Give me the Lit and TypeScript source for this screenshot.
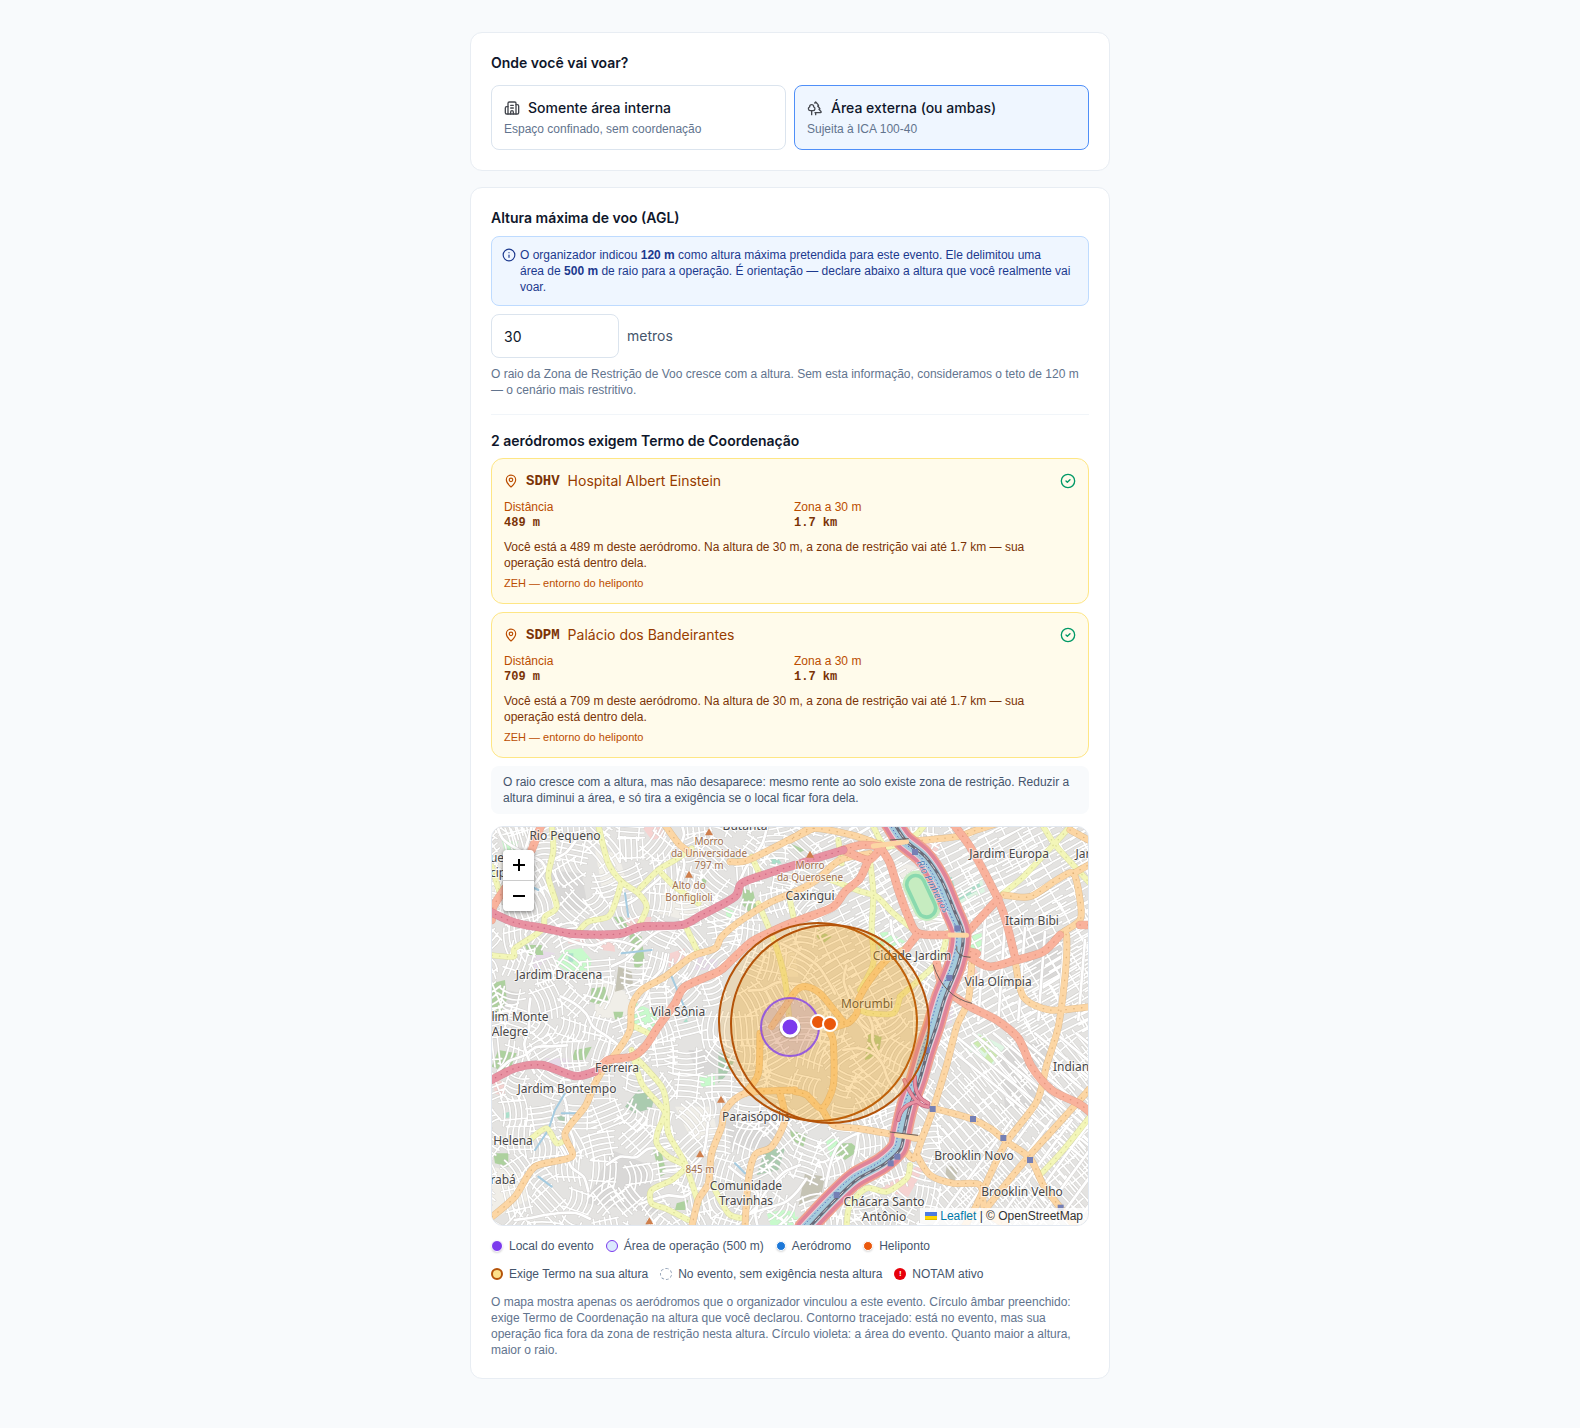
import { LitElement, html, svg, css } from 'lit';
import { customElement, property, state } from 'lit/decorators.js';
import { classMap } from 'lit/directives/class-map.js';

const icon = (size: number, body: unknown) => html`<svg
  class="icon"
  width=${size}
  height=${size}
  viewBox="0 0 24 24"
  fill="none"
  stroke="currentColor"
  stroke-width="2"
  stroke-linecap="round"
  stroke-linejoin="round"
  aria-hidden="true"
>${body}</svg>`;

const building = svg`<path d="M10 12h4"/><path d="M10 8h4"/><path d="M14 21v-3a2 2 0 0 0-4 0v3"/><path d="M6 10H4a2 2 0 0 0-2 2v7a2 2 0 0 0 2 2h16a2 2 0 0 0 2-2V9a2 2 0 0 0-2-2h-2"/><path d="M6 21V5a2 2 0 0 1 2-2h8a2 2 0 0 1 2 2v16"/>`;
const trees = svg`<path d="M10 10v.2A3 3 0 0 1 8.9 16H5a3 3 0 0 1-1-5.8V10a3 3 0 0 1 6 0Z"/><path d="M7 16v6"/><path d="M13 19v3"/><path d="M12 19h8.3a1 1 0 0 0 .7-1.7L18 14h.3a1 1 0 0 0 .7-1.7L16 9h.2a1 1 0 0 0 .8-1.7L13 3l-1.4 1.5"/>`;
const info = svg`<circle cx="12" cy="12" r="10"/><path d="M12 16v-4"/><path d="M12 8h.01"/>`;
const pin = svg`<path d="M20 10c0 4.993-5.539 10.193-7.399 11.799a1 1 0 0 1-1.202 0C9.539 20.193 4 14.993 4 10a8 8 0 0 1 16 0"/><circle cx="12" cy="10" r="3"/>`;
const check = svg`<circle cx="12" cy="12" r="10"/><path d="m9 12 2 2 4-4"/>`;

/* Smooth curve through a list of points (Catmull-Rom turned into Béziers). */
function curve(points: string): string {
  const p = points.split(' ').map((s) => s.split(',').map(Number));
  let d = `M${p[0]}`;
  for (let i = 0; i < p.length - 1; i++) {
    const a = p[Math.max(0, i - 1)];
    const b = p[i];
    const c = p[i + 1];
    const e = p[Math.min(p.length - 1, i + 2)];
    const c1 = [b[0] + (c[0] - a[0]) / 7, b[1] + (c[1] - a[1]) / 7];
    const c2 = [c[0] - (e[0] - b[0]) / 7, c[1] - (e[1] - b[1]) / 7];
    d += `C${c1.map(Math.round)} ${c2.map(Math.round)} ${c}`;
  }
  return d;
}

/* Repeatable pseudo-random numbers, so the street pattern is always the same. */
function random(seed: number) {
  let s = seed;
  return () => {
    s = (s * 1664525 + 1013904223) % 4294967296;
    return s / 4294967296;
  };
}

function localStreets(): string {
  const rnd = random(41);
  let d = '';
  for (let y = -20; y < 1240; y += 88) {
    for (let x = -20; x < 1840; x += 88) {
      const planned = x > 1330 || (x > 1000 && x < 1250 && y < 560);
      const angle = planned ? (y < 620 ? -0.5 : 0.85) + (rnd() - 0.5) * 0.12 : rnd() * 3.14;
      const cos = Math.cos(angle);
      const sin = Math.sin(angle);
      const cx = x + rnd() * 40;
      const cy = y + rnd() * 40;
      const half = 44 + rnd() * 20;
      const bend = planned ? 0 : (rnd() - 0.5) * 44;
      const step = planned ? 23 : 17;
      for (let k = -2; k <= 2; k++) {
        const ox = cx - sin * k * step;
        const oy = cy + cos * k * step;
        const l = half - (planned ? 0 : rnd() * 22);
        d += `M${Math.round(ox - cos * l)} ${Math.round(oy - sin * l)}Q${Math.round(ox - sin * bend)} ${Math.round(oy + cos * bend)} ${Math.round(ox + cos * l)} ${Math.round(oy + sin * l)}`;
      }
      for (const t of [-0.6, 0.5]) {
        const ox = cx + cos * half * t;
        const oy = cy + sin * half * t;
        d += `M${Math.round(ox + sin * 40)} ${Math.round(oy - cos * 40)}L${Math.round(ox - sin * 40)} ${Math.round(oy + cos * 40)}`;
      }
    }
  }
  return d;
}

function collectorStreets(): string {
  const rnd = random(7);
  let d = '';
  for (let i = 0; i < 34; i++) {
    let x = rnd() * 1300;
    let y = rnd() * 1220;
    let a = rnd() * 6.28;
    const pts = [`${Math.round(x)},${Math.round(y)}`];
    for (let k = 0; k < 5; k++) {
      a += (rnd() - 0.5) * 1.3;
      x += Math.cos(a) * 46;
      y += Math.sin(a) * 46;
      pts.push(`${Math.round(x)},${Math.round(y)}`);
    }
    d += curve(pts.join(' '));
  }
  for (let i = 0; i < 9; i++) {
    d += `M${1340 + i * 62} 640L${1790 + i * 62} 1010M${1330 + i * 60} 1240L${1580 + i * 60} 900`;
  }
  for (let i = 0; i < 6; i++) d += `M${1500 + i * 60} ${300 + i * 12}L${1480 + i * 60} 600`;
  return d;
}

const LOCAL = localStreets();
const COLLECTOR = collectorStreets();

/* Land cover: fill colour and polygons, at three units to the pixel. */
const LAND: [string, string[]][] = [
  ['#f0eee8', ['20,110 90,120 130,200 60,260 20,230', '330,90 400,100 420,170 350,200', '540,190 640,200 680,260 600,300 520,280', '330,470 430,520 440,600 330,590', '570,860 680,860 700,950 620,960', '20,1040 110,1060 130,1140 20,1200', '1230,120 1290,140 1380,310 1300,310 1250,240', '870,380 930,400 940,470 880,470']],
  ['#d9d8d7', ['180,150 290,160 310,270 210,270', '610,690 700,690 690,780 640,770', '720,900 880,880 870,980 740,990', '380,990 480,1030 520,1180 300,1150', '20,500 110,520 60,600', '1320,560 1400,590 1380,640', '1540,690 1690,660 1680,880 1560,860', '1600,330 1750,350 1760,470 1640,480']],
  ['#f6d3d1', ['420,295 500,290 490,330 420,335', '330,350 385,345 390,395 350,390', '555,400 600,385 600,430 550,440', '245,345 300,350 300,375 250,370', '1310,70 1370,60 1350,110 1320,100', '1420,430 1470,440 1490,480 1430,470', '1310,650 1340,680 1320,800 1290,760', '1260,1060 1330,1020 1270,1130 1180,1110', '20,770 60,790 60,830 30,820', '470,20 530,20 540,50 500,60']],
  ['#e6dbe8', ['130,385 210,400 150,450', '640,410 700,420 690,450 620,450', '180,715 250,715 260,745 190,745', '1370,560 1410,550 1400,610 1370,620']],
  ['#c8facc', ['210,430 240,390 290,385 320,420 315,450 250,455', '445,545 500,570 520,600 490,640 440,630', '720,262 750,275 745,298 725,290', '845,1180 890,1170 930,1175 930,1220 860,1225', '50,60 100,65 90,100 60,100', '1170,340 1210,335 1270,370 1240,390 1180,390', '1440,380 1460,345 1490,340 1490,390 1460,410', '915,1190 940,1190 930,1220 915,1220', '640,770 690,760 690,800 650,800', '1020,960 1060,955 1080,990 1040,1020']],
  ['#add19e', ['20,490 60,480 65,540 40,590 20,600', '430,330 470,350 480,430 450,450', '385,290 410,290 430,320 410,325', '120,375 170,375 175,405 130,405', '320,505 360,500 370,540 340,552 315,545', '385,575 415,575 410,600 390,598', '775,205 805,215 815,260 790,275 770,250', '40,690 95,700 70,760 20,740', '1150,640 1190,650 1180,710 1140,720', '1055,970 1100,970 1125,990 1080,1020 1050,1000', '505,990 530,1000 545,1060 525,1070', '25,1000 70,1000 70,1040 30,1030', '575,1150 610,1140 600,1170 570,1170', '640,170 665,180 660,200 645,195', '270,690 320,680 300,720 260,720', '915,70 960,90 940,100', '1000,330 1040,350 1015,370 995,350', '915,930 965,945 955,980 920,960']],
  ['#aacbaf', ['700,695 750,720 720,770 700,790', '420,860 460,810 510,825 500,865 450,880', '840,990 900,985 880,1050 815,1065', '215,890 245,885 265,900 255,920 225,905']],
  ['#c5c3b4', ['400,440 440,455 445,500 390,515', '960,1060 1020,1070 1010,1120 940,1160', '1385,1035 1420,1045 1410,1080 1380,1080']],
  ['#dff6e4', ['1400,240 1490,170 1500,215 1420,255', '1450,690 1480,640 1560,680 1520,740']],
  ['#aae0cb', ['1380,180 1400,170 1410,205 1385,205', '1405,235 1480,185 1490,205 1410,248', '850,115 875,110 890,130 860,135', '735,110 760,100 765,120', '250,400 265,400 265,425 250,425', '55,880 75,875 80,892 60,895', '595,605 605,595 610,610']],
  ['#cdebb0', ['1465,670 1485,645 1520,670 1500,700', '1495,720 1515,690 1545,700 1515,735']],
];

const ROADS: { color: string; edge: string; width: number; lines: string[] }[] = [
  {
    color: '#f3f6b8', edge: '#d5d88f', width: 15,
    lines: ['200,15 205,90 190,170 215,260 180,290 170,330 90,385 85,410 15,405', '340,15 370,130 410,185 460,220 485,260 465,310', '410,185 390,250 370,290 310,305 280,335', '465,205 520,150 570,120 620,85', '530,160 570,200 640,250', '605,325 640,400', '800,110 825,165', '820,250 850,320 880,400 900,480 915,620', '440,690 470,790 520,850 540,880 520,930 515,970 550,1010 600,1040 560,1080 500,1110 500,1150 540,1165 610,1200', '460,720 530,800 545,860 550,940 600,1030 640,1150', '440,615 490,640', '140,955 185,925 215,970 240,960', '680,1090 730,1180 775,1195', '1165,20 1205,80 1285,50 1315,20', '1155,120 1165,220 1160,330 1165,430 1125,510', '1015,170 1115,210 1175,230 1225,280 1300,340', '1555,220 1615,170 1705,75 1755,20', '1675,20 1715,80 1815,190', '1385,340 1375,390 1345,440 1245,530', '1245,530 1225,580 1155,580 1125,570', '1815,890 1735,990 1665,1065', '1275,1035 1265,1075 1205,1115 1145,1105 1095,1155 1085,1215', '915,240 925,290', '20,140 45,220', '1060,60 1070,130'],
  },
  {
    color: '#fcd6a4', edge: '#dcae74', width: 18,
    lines: ['540,15 580,70 620,100', '735,125 790,120 930,50 985,25 1100,45 1190,75', '985,25 915,60', '1265,65 1415,50 1475,30 1530,12', '1155,100 1065,120 995,180 930,215 850,250 770,300 710,350 690,385 620,410 540,470 470,510 440,560 435,630 400,690 360,740 330,790 300,860 240,940 260,1010 150,1040 90,1130 15,1195', '930,810 780,820 720,870 710,920 680,1000 670,1090 640,1140 620,1220', '885,820 900,900 860,980 810,1005 790,1080 780,1220', '825,640 820,760 780,820', '860,620 900,560 935,510 965,500 1005,520 1055,580 1085,610 1115,580 1120,540 1155,480 1205,420 1265,385', '930,815 965,825 1010,865 1045,795 1045,665 1035,630 1085,610', '1010,865 1045,915 1115,925 1235,945 1295,955', '1555,225 1635,230 1715,180 1765,160 1785,240 1785,300 1730,340 1745,350 1740,470 1720,620 1685,735 1655,845 1565,965 1515,1065 1475,1155 1435,1225', '1590,420 1615,530 1695,570 1820,560', '1765,160 1820,130', '1755,30 1820,65', '1345,865 1455,895 1515,925 1565,965 1635,1015 1675,1095 1735,1175 1765,1215', '1820,800 1735,895 1635,1005 1500,1170', '1460,430 1450,540 1415,620 1385,735 1345,865 1315,945 1285,1015 1245,965', '1295,1005 1335,1065 1405,1090 1485,1095 1500,1170 1560,1215', '1225,945 1230,975 1285,1015'],
  },
  {
    color: '#f9b29c', edge: '#dd8f78', width: 22,
    lines: ['170,12 140,90', '60,205 25,260 20,300', '1075,90 1130,75 1190,80', '1075,90 1150,120 1190,80', '1150,120 1125,175 1080,215 1045,260 985,285 915,310 870,330 800,365 740,420 700,455 600,500 570,550 520,620 480,680 440,710 370,720 345,745', '1185,80 1215,130 1240,210 1270,290 1300,340 1395,345 1435,345', '1300,340 1265,385', '1405,12 1455,80 1505,170 1540,240 1565,310 1590,410', '1540,235 1445,340', '1435,345 1430,385 1475,400 1455,410 1515,440 1595,420 1675,395 1725,345', '1785,315 1820,315', '1355,430 1375,500 1455,560 1535,600 1600,655 1640,740 1700,810 1780,850 1820,880'],
  },
  {
    color: '#e892a2', edge: '#cf6d84', width: 22,
    lines: ['15,275 90,308 180,325 270,342 400,342 470,320 590,315 650,285 750,230 770,190 850,160 930,135 1075,90', '15,782 90,745 170,735 270,768 330,755'],
  },
];

const RIVER = '1218,5 1255,60 1315,110 1362,180 1400,270 1426,340 1412,430 1372,530 1345,620 1318,700 1295,780 1268,855 1250,930 1238,985 1190,1030 1110,1075 1045,1135 960,1225';

const STATIONS = ['1290,96', '1417,325', '1393,474', '1325,690', '1343,867', '1464,897', '1555,954', '1635,1020', '1727,1163', '1055,1125', '1237,1010', '1217,1030'];
const PEAKS = ['672,36', '612,163', '975,103', '708,838', '645,1002', '493,1203'];

/* Place names: text, x, baseline y and, for summits, the brown variant. */
const PLACES: [string, number, number, string?][] = [
  ['Rio Pequeno', 73, 13], ['Butantã', 253, 3], ['Jardim Dracena', 67, 152], ['Vila Sônia', 186, 189],
  ['lim Monte', 28, 194], ['Alegre', 18, 209], ['Caxingui', 318, 73], ['Jardim Europa', 517, 31],
  ['Jar', 591, 31], ['Itaim Bibi', 540, 98], ['Cidade Jardim', 420, 133], ['Vila Olímpia', 506, 159],
  ['Morumbi', 375, 181], ['Ferreira', 125, 245], ['Jardim Bontempo', 75, 266], ['Helena', 21, 318],
  ['rabá', 11, 357], ['Paraisópolis', 264, 294], ['Comunidade', 254, 363], ['Travinhas', 254, 378],
  ['Indian', 579, 244], ['Brooklin Novo', 482, 333], ['Brooklin Velho', 530, 369],
  ['Chácara Santo', 392, 379], ['Antônio', 392, 394], ['ue', 5, 35], ['cip', 6, 50],
  ['Morro', 217, 18, 'peak'], ['da Universidade', 217, 30, 'peak'], ['797 m', 217, 42, 'peak'],
  ['Alto do', 197, 62, 'peak'], ['Bonfiglioli', 197, 74, 'peak'],
  ['Morro', 318, 42, 'peak'], ['da Querosene', 318, 54, 'peak'], ['845 m', 208, 346, 'peak'],
];

@customElement('flight-map')
export class FlightMap extends LitElement {
  @state() private zoom = 1;

  static styles = css`
    :host { display: block; position: relative; overflow: hidden; border: 1px solid #e2e8f0; border-radius: 12px; }
    .canvas { display: block; width: 100%; height: 398px; background: #e4e3e1; }
    .place { font: 12px "Noto Sans", sans-serif; fill: #4a4848; text-anchor: middle; paint-order: stroke; stroke: rgba(255, 255, 255, 0.65); stroke-width: 2px; }
    .peak { font-size: 10px; fill: #a0704f; }
    .water { font: italic 10px "Noto Sans", sans-serif; fill: #4d80b3; text-anchor: middle; paint-order: stroke; stroke: rgba(255, 255, 255, 0.6); stroke-width: 1px; }
    .controls { position: absolute; left: 11px; top: 23px; display: flex; flex-direction: column; border-radius: 4px; overflow: hidden; box-shadow: 0 1px 4px rgba(0, 0, 0, 0.5); }
    .zoom { width: 31px; height: 30px; padding: 0; border: 0; background: #fff; color: #000; display: grid; place-items: center; cursor: pointer; }
    .zoom + .zoom { border-top: 1px solid #ccc; height: 31px; }
    .credit { position: absolute; right: 0; bottom: 0; padding: 0 5px; background: rgba(255, 255, 255, 0.8); color: #333; font: 12px/17px "Liberation Sans", Arial, sans-serif; }
    .credit a { color: #0078a8; text-decoration: none; }
    .flag { width: 12px; height: 8px; }
  `;

  render() {
    return html`
      <svg class="canvas" viewBox="0 0 596 398" preserveAspectRatio="xMidYMid slice" role="img" aria-label="Mapa do evento">
        <g transform="translate(298 199) scale(${this.zoom}) translate(-298 -199)">
          <g transform="translate(-7 -7) scale(.33333)" fill="none" stroke-linejoin="round" stroke-linecap="round">
            ${LAND.map(([fill, polys]) => polys.map((p) => svg`<polygon points=${p} fill=${fill} />`))}
            <path d=${LOCAL} stroke="#c6c4c2" stroke-width="8" opacity=".6" />
            <path d=${LOCAL} stroke="#fff" stroke-width="5" />
            <path d=${COLLECTOR} stroke="#cfcccb" stroke-width="11" opacity=".7" />
            <path d=${COLLECTOR} stroke="#fff" stroke-width="8" />
            <path d="M240 820L210 870L190 930L150 990M230 880L280 880M420 220L430 290M560 470L610 590M100 180L160 210M160 1070L200 1100M410 400L500 390M750 1030L780 1060" stroke="#a5cbe0" stroke-width="6" />
            <g transform="rotate(-25 1310 225)">
              <rect x="1268" y="148" width="82" height="158" rx="41" fill="#c6ecc0" />
              <rect x="1280" y="162" width="54" height="132" rx="27" stroke="#8ad9ae" stroke-width="11" />
            </g>
            ${ROADS.slice(0, 3).map((r) => svg`
              ${r.lines.map((l) => svg`<path d=${curve(l)} stroke=${r.edge} stroke-width=${r.width + 3} opacity=".7" />`)}
              ${r.lines.map((l) => svg`<path d=${curve(l)} stroke=${r.color} stroke-width=${r.width} />`)}
              ${r.lines.map((l) => svg`<path d=${curve(l)} stroke=${r.edge} stroke-width="4" stroke-dasharray="1 22" opacity=".8" />`)}`)}
            <path d=${curve(RIVER)} stroke="#f0a08f" stroke-width="66" />
            <path d=${curve(RIVER)} stroke="#df8499" stroke-width="56" />
            <path d=${curve(RIVER)} stroke="#f0cfd8" stroke-width="34" />
            <path d=${curve(RIVER)} stroke="#a5cbdc" stroke-width="28" />
            <path d=${curve(RIVER)} stroke="#6a6a78" stroke-width="9" transform="translate(8 2)" />
            <path d=${curve(RIVER)} stroke="#c9c9cf" stroke-width="3" stroke-dasharray="18 16" transform="translate(8 2)" />
            <path d=${curve(RIVER)} stroke="#5a6fc0" stroke-width="3" stroke-dasharray="2 9" transform="translate(-10 -2)" />
            <path d="M1235 945L1295 955M1165 78L1265 65M1395 345L1445 346" stroke="#fcd6a4" stroke-width="15" />
            <path d="M1258 780Q1290 860 1330 860M1240 900Q1250 850 1300 845M1290 770Q1285 830 1330 850" stroke="#c2607c" stroke-width="12" />
            <path d="M1258 780Q1290 860 1330 860M1240 900Q1250 850 1300 845M1290 770Q1285 830 1330 850" stroke="#e892a2" stroke-width="8" />
            <path d="M1345 435Q1375 530 1460 550M1415 380Q1410 410 1455 412M1215 60L1270 56M1215 936L1298 946" stroke="#6d5f5a" stroke-width="3" />
            ${ROADS.slice(3).map((r) => svg`
              ${r.lines.map((l) => svg`<path d=${curve(l)} stroke=${r.edge} stroke-width=${r.width + 3} opacity=".7" />`)}
              ${r.lines.map((l) => svg`<path d=${curve(l)} stroke=${r.color} stroke-width=${r.width} />`)}
              ${r.lines.map((l) => svg`<path d=${curve(l)} stroke=${r.edge} stroke-width="4" stroke-dasharray="1 18" />`)}`)}
            ${STATIONS.map((s) => {
              const [x, y] = s.split(',').map(Number);
              return svg`<rect x=${x - 9} y=${y - 9} width="18" height="18" fill="#7580b5" />`;
            })}
            ${PEAKS.map((s) => {
              const [x, y] = s.split(',').map(Number);
              return svg`<path d="M${x - 12} ${y + 10}L${x} ${y - 11}L${x + 12} ${y + 10}Z" fill="#cf7f4c" />`;
            })}
          </g>
          ${PLACES.map(([t, x, y, kind]) => svg`<text class="place ${kind ?? ''}" x=${x} y=${y}>${t}</text>`)}
          <text class="water" transform="translate(438 61) rotate(62)">Rio Pinheiros</text>
          <circle cx="326" cy="195" r="99" fill="#f59e0b" fill-opacity=".18" stroke="#b45309" stroke-width="2" />
          <circle cx="338" cy="197" r="99" fill="#f59e0b" fill-opacity=".18" stroke="#b45309" stroke-width="2" />
          <circle cx="298" cy="200" r="29" fill="#7c3aed" fill-opacity=".12" stroke="#7c3aed" stroke-opacity=".75" stroke-width="2" />
          <circle cx="298" cy="201" r="11" fill="#000" opacity=".18" />
          <circle cx="298" cy="200" r="9" fill="#7c3aed" stroke="#fff" stroke-width="3" />
          <circle cx="326" cy="195" r="7" fill="#ea580c" stroke="#fff" stroke-width="2" />
          <circle cx="338" cy="197" r="7" fill="#ea580c" stroke="#fff" stroke-width="2" />
        </g>
      </svg>
      <div class="controls">
        <button class="zoom" type="button" aria-label="Aproximar" @click=${() => (this.zoom = Math.min(4, this.zoom * 1.5))}>
          <svg width="12" height="12" viewBox="0 0 12 12" stroke="#000" stroke-width="2"><path d="M0 6H12M6 0V12" /></svg>
        </button>
        <button class="zoom" type="button" aria-label="Afastar" @click=${() => (this.zoom = Math.max(1, this.zoom / 1.5))}>
          <svg width="12" height="12" viewBox="0 0 12 12" stroke="#000" stroke-width="2"><path d="M0 6H12" /></svg>
        </button>
      </div>
      <div class="credit">
        <a href="https://leafletjs.com"><svg class="flag" viewBox="0 0 12 8" aria-hidden="true"><path fill="#4C7BE1" d="M0 0h12v4H0z" /><path fill="#FFD500" d="M0 4h12v3H0z" /><path fill="#E0BC00" d="M0 7h12v1H0z" /></svg> Leaflet</a> | © OpenStreetMap
      </div>
    `;
  }
}

@customElement('aerodrome-card')
export class AerodromeCard extends LitElement {
  @property() code = '';
  @property() name = '';
  @property() distance = '';
  @property() zone = '';
  @property() height = '';

  static styles = css`
    :host { display: block; padding: 12px; border: 1px solid #fee685; border-radius: 12px; background: #fffbeb; color: #7b3306; font: 12px/16px "Liberation Sans", Arial, sans-serif; }
    .head { display: flex; align-items: center; gap: 8px; font: 400 14px/20px Inter, sans-serif; color: #973c00; }
    .icon { flex: none; color: #bb4d00; }
    .code { font: 700 14px/20px "Liberation Mono", monospace; color: #7b3306; }
    .name { flex: 1; }
    .done { display: flex; }
    .done .icon { color: #009966; }
    .facts { display: grid; grid-template-columns: 1fr 1fr; gap: 8px; margin: 8px 0; }
    .label { color: #bb4d00; }
    .value { margin: 0; font: 700 12px/16px "Liberation Mono", monospace; }
    .text { margin: 0; }
    .kind { margin: 4px 0 0; font-size: 11px; color: #bb4d00; }
  `;

  render() {
    const summary = `Você está a ${this.distance} deste aeródromo. Na altura de ${this.height} m, a zona de restrição vai até ${this.zone} — sua operação está dentro dela.`;
    return html`
      <div class="head">
        ${icon(14, pin)}<span class="code">${this.code}</span><span class="name">${this.name}</span>
        <span class="done">${icon(16, check)}</span>
      </div>
      <dl class="facts">
        <div><dt class="label">Distância</dt><dd class="value">${this.distance}</dd></div>
        <div><dt class="label">${`Zona a ${this.height} m`}</dt><dd class="value">${this.zone}</dd></div>
      </dl>
      <p class="text">${summary}</p>
      <p class="kind">ZEH — entorno do heliponto</p>
    `;
  }
}

@customElement('app-root')
export class AppRoot extends LitElement {
  @state() private area = 'externa';
  @state() private height = '30';

  static styles = css`
    :host { display: block; min-height: 100vh; box-sizing: border-box; padding: 32px 16px; background: #f8fafc; color: #0f172b; font: 12px/16px "Liberation Sans", Arial, sans-serif; }
    * { box-sizing: border-box; }
    .page { max-width: 640px; margin: 0 auto; display: flex; flex-direction: column; gap: 16px; }
    .card { padding: 20px; border: 1px solid #e8edf3; border-radius: 12px; background: #fff; }
    .title { display: block; margin: 0; font: 600 14px/20px Inter, sans-serif; }
    .options { display: grid; grid-template-columns: 1fr 1fr; gap: 8px; margin-top: 12px; }
    .option { display: flex; flex-direction: column; gap: 3px; padding: 12px; border: 1px solid #dbe4ee; border-radius: 8px; background: #fff; color: #0f172b; font: inherit; text-align: left; cursor: pointer; }
    .selected { border-color: #4f8ff8; background: #eff6ff; }
    .name { display: flex; align-items: center; gap: 8px; font: 500 14px/20px Inter, sans-serif; }
    .name .icon { color: #45484f; }
    .hint { color: #62748e; }
    .stack { display: flex; flex-direction: column; gap: 8px; }
    .notice { display: flex; gap: 4px; padding: 10px; border: 1px solid #bedbff; border-radius: 8px; background: #eff6ff; color: #1c398e; }
    .notice .icon { flex: none; margin-top: 1px; }
    .paragraph { margin: 0; }
    .field { display: flex; align-items: center; gap: 8px; font: 14px/20px Inter, sans-serif; color: #45556c; }
    .input { width: 128px; height: 44px; padding: 0 12px; border: 1px solid #dbe4ee; border-radius: 8px; background: #fff; color: #0f172b; font: inherit; }
    .divider { margin: 16px 0; border: 0; border-top: 1px solid #f1f5f9; }
    .list { display: flex; flex-direction: column; gap: 8px; margin-top: 7px; }
    .note { margin: 0; padding: 8px 12px; border-radius: 8px; background: #f8fafc; color: #45556c; }
    .map { margin-top: 12px; }
    .legend { display: flex; flex-wrap: wrap; gap: 12px; margin: 12px 0; padding: 0; list-style: none; color: #45556c; }
    .entry { display: flex; align-items: center; gap: 6px; }
    .mark { width: 12px; height: 12px; border-radius: 50%; border: 1px solid; display: grid; place-items: center; }
    .event { border-color: #fff; background: #7c3aed; box-shadow: 0 1px 2px rgba(0, 0, 0, 0.16); }
    .operation { border-color: #7c3aed; background: #dbeafe; }
    .airfield, .heliport { width: 10px; height: 10px; border-color: #fff; background: #1d78d8; box-shadow: 0 1px 2px rgba(0, 0, 0, 0.16); }
    .heliport { background: #ea580c; }
    .required { border: 2px solid #b45309; background: #fde08a; }
    .exempt { border: 1px dashed #94a3b8; }
    .notam { border: 0; background: #e7000b; color: #fff; font: 700 8px/12px "Liberation Sans", Arial, sans-serif; }
  `;

  private option(id: string, glyph: unknown, label: string, hint: string) {
    const on = this.area === id;
    return html`<button type="button" class=${classMap({ option: true, selected: on })} aria-pressed=${on} @click=${() => (this.area = id)}>
      <span class="name">${icon(16, glyph)}${label}</span>
      <span class="hint">${hint}</span>
    </button>`;
  }

  private entry(kind: string, label: string, sign = '') {
    return html`<li class="entry"><span class="mark ${kind}">${sign}</span>${label}</li>`;
  }

  render() {
    return html`
      <main class="page">
        <section class="card">
          <h2 class="title">Onde você vai voar?</h2>
          <div class="options">
            ${this.option('interna', building, 'Somente área interna', 'Espaço confinado, sem coordenação')}
            ${this.option('externa', trees, 'Área externa (ou ambas)', 'Sujeita à ICA 100-40')}
          </div>
        </section>
        <section class="card">
          <div class="stack">
            <label class="title" for="height">Altura máxima de voo (AGL)</label>
            <div class="notice">
              ${icon(14, info)}
              <p class="paragraph">O organizador indicou <strong>120 m</strong> como altura máxima pretendida para este evento. Ele delimitou uma<br />área de <strong>500 m</strong> de raio para a operação. É orientação — declare abaixo a altura que você realmente vai voar.</p>
            </div>
            <div class="field">
              <input class="input" id="height" type="text" inputmode="numeric" .value=${this.height} @change=${(e: Event) => (this.height = (e.target as HTMLInputElement).value)} />
              <span>metros</span>
            </div>
            <p class="paragraph hint">O raio da Zona de Restrição de Voo cresce com a altura. Sem esta informação, consideramos o teto de 120 m — o cenário mais restritivo.</p>
          </div>
          <hr class="divider" />
          <h2 class="title">2 aeródromos exigem Termo de Coordenação</h2>
          <div class="list">
            <aerodrome-card code="SDHV" name="Hospital Albert Einstein" distance="489 m" zone="1.7 km" height=${this.height}></aerodrome-card>
            <aerodrome-card code="SDPM" name="Palácio dos Bandeirantes" distance="709 m" zone="1.7 km" height=${this.height}></aerodrome-card>
            <p class="note">O raio cresce com a altura, mas não desaparece: mesmo rente ao solo existe zona de restrição. Reduzir a altura diminui a área, e só tira a exigência se o local ficar fora dela.</p>
          </div>
          <flight-map class="map"></flight-map>
          <ul class="legend">
            ${this.entry('event', 'Local do evento')}
            ${this.entry('operation', 'Área de operação (500 m)')}
            ${this.entry('airfield', 'Aeródromo')}
            ${this.entry('heliport', 'Heliponto')}
            ${this.entry('required', 'Exige Termo na sua altura')}
            ${this.entry('exempt', 'No evento, sem exigência nesta altura')}
            ${this.entry('notam', 'NOTAM ativo', '!')}
          </ul>
          <p class="paragraph hint">O mapa mostra apenas os aeródromos que o organizador vinculou a este evento. Círculo âmbar preenchido: exige Termo de Coordenação na altura que você declarou. Contorno tracejado: está no evento, mas sua operação fica fora da zona de restrição nesta altura. Círculo violeta: a área do evento. Quanto maior a altura, maior o raio.</p>
        </section>
      </main>
    `;
  }
}
